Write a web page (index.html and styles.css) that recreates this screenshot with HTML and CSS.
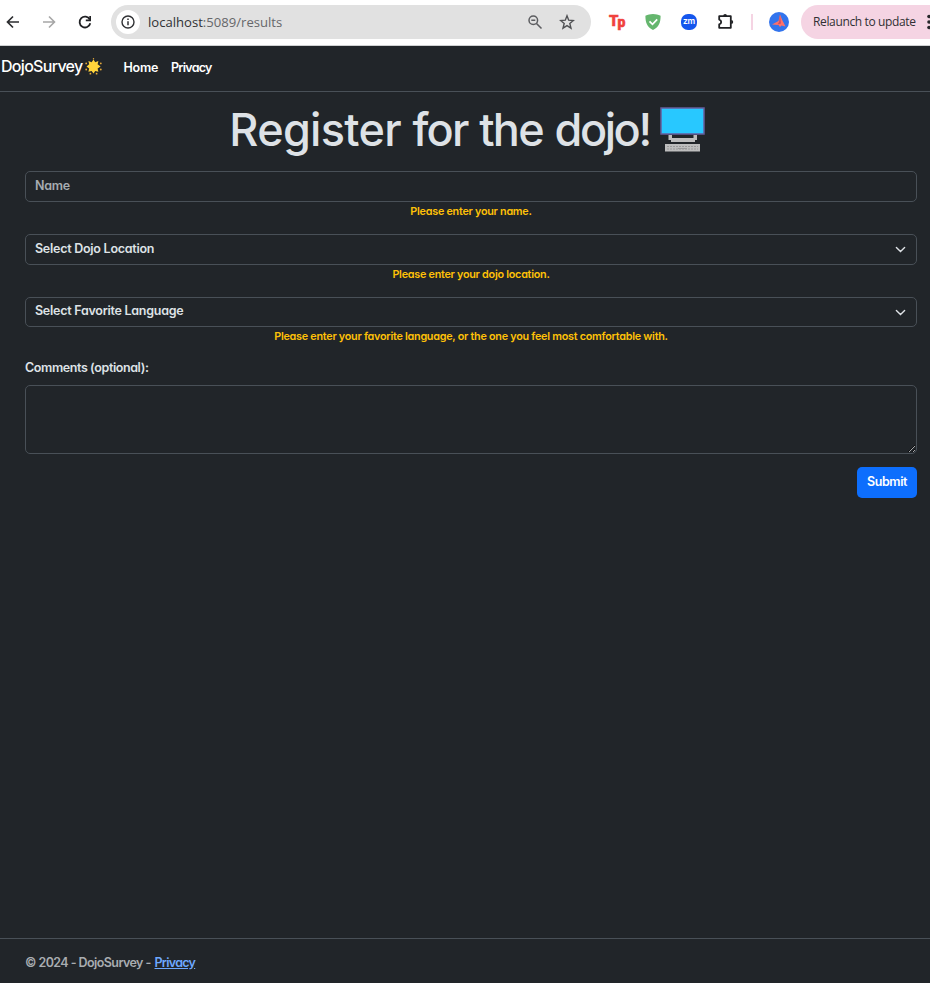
FILE: index.html
```html
<!DOCTYPE html>
<html lang="en">
<head>
<meta charset="utf-8">
<title>DojoSurvey</title>
<link rel="stylesheet" href="styles.css">
</head>
<body>
<div class="browser">
  <div class="history">
    <svg width="16" height="16" viewBox="0 0 16 16"><path d="M14 8H3M8 2.500 2.500 8 8 13.500" fill="none" stroke="#2b2c2f" stroke-width="1.700"/></svg>
    <svg width="16" height="16" viewBox="0 0 16 16"><path d="M2 8h11M8 2.500 13.500 8 8 13.500" fill="none" stroke="#a6a6a6" stroke-width="1.600"/></svg>
    <svg width="16" height="16" viewBox="0 0 16 16"><path d="M12.800 5.500A5.400 5.400 0 1 0 13.300 9.300" fill="none" stroke="#202124" stroke-width="1.800"/><path d="M14 2v5.200H8.800V5.600h3.500V2z" fill="#202124"/></svg>
  </div>
  <div class="address">
    <span class="info"><svg width="14" height="14" viewBox="0 0 14 14"><circle cx="7" cy="7" r="6" fill="none" stroke="#303134" stroke-width="1.400"/><path d="M7 6.200v4M7 3.500v1.500" stroke="#303134" stroke-width="1.500"/></svg></span>
    <span class="url"><b>localhost</b>:5089/results</span>
    <svg class="lens" width="16" height="16" viewBox="0 0 16 16"><circle cx="6.300" cy="6.200" r="4.300" fill="none" stroke="#5c5d60" stroke-width="1.500"/><path d="M4.300 6.200h4M9.500 9.500l5 5" stroke="#5c5d60" stroke-width="1.500"/></svg>
    <svg width="16" height="16" viewBox="0 0 16 16"><path d="m8 1.800 1.700 4.400 4.700.3-3.600 3 1.200 4.700L8 11.700l-4 2.500 1.200-4.700-3.600-3 4.700-.3z" fill="none" stroke="#505154" stroke-width="1.400"/></svg>
  </div>
  <div class="extensions">
    <span class="tp-app"><b>T</b><i>p</i></span>
    <svg width="16" height="16" viewBox="0 0 16 16"><path d="M8 0c3 .2 5 .9 7.600 1.700C15.600 8.500 14 13 8 16 2 13 .4 8.500.4 1.700 3 .9 5 .2 8 0z" fill="#65b66e"/><path d="m4.500 7.300 3 3 4.700-5" fill="none" stroke="#fff" stroke-width="1.700"/></svg>
    <span class="zoom-app">zm</span>
    <svg width="18" height="18" viewBox="0 0 18 18"><path d="M2.200 3.200h11.600v11.600H2.200v-3.400q2-.5 2-2.400t-2-2.400z" fill="none" stroke="#202124" stroke-width="1.800" stroke-linejoin="round"/><path d="M6.200 3a1.900 1.900 0 0 1 3.800 0zM14.200 7a2 2 0 0 1 0 4z" fill="#202124"/></svg>
  </div>
  <span class="divider"></span>
  <svg class="avatar" width="20" height="20" viewBox="0 0 20 20"><circle cx="10" cy="10" r="10" fill="#3274ed"/><path d="m11 2.500 2.200 5.500 3.300 6.500-4-1-1.500 1.500-1.500-2-6.500-.5L9.500 9z" fill="#ff7169"/><path d="m11 2.500-1 7.500-1.500 2.500 3.500-1z" fill="#cf5068"/></svg>
  <div class="update"><span>Relaunch to update</span><svg width="3" height="16" viewBox="0 0 3 16"><g fill="#27282b"><circle cx="2" cy="2.500" r="1.800"/><circle cx="2" cy="8" r="1.800"/><circle cx="2" cy="13.500" r="1.800"/></g></svg></div>
</div>
<nav class="navbar">
  <a class="brand"><span>DojoSurvey</span><svg width="17" height="17" viewBox="0 0 17 17"><path d="m8.500 1.500 1.700 2.700 3.200-1.100-.8 3.200 3 2.200-3 1.900.8 3.300-3.200-.8-1.700 2.600-1.900-2.600-3.200.8.800-3.200-2.700-2 2.700-2.200-.8-3.200 3.200 1.100z" fill="#ffd43b"/><g fill="#e5a93b"><circle cx="8.500" cy=".8" r=".7"/><circle cx="1.200" cy="5.400" r=".9"/><circle cx="15.800" cy="5.400" r=".9"/><circle cx="1.200" cy="11.500" r=".9"/><circle cx="15.800" cy="11.500" r=".9"/><circle cx="5.400" cy="15.700" r=".9"/><circle cx="11.600" cy="15.700" r=".9"/></g></svg></a>
  <a class="nav-home">Home</a><a class="nav-privacy">Privacy</a>
</nav>
<main class="content">
  <h1><span><span class="wide">Register</span> for the <span class="tight">dojo!</span></span><svg width="46" height="46" viewBox="0 0 46 46"><path d="M1 1h43v26H1z" fill="#28c8ff" stroke="#655e9d" stroke-width="1.500"/><path d="M8.500 28H12v3h21.500v-3H37v5h-2v2H11v-2H8.500z" fill="#bdbdbd"/><path d="M5 37h35v7.500H5z" fill="#bdbdbd"/><path d="M7 39.500h31M7 42h31" stroke="#999" stroke-width="1" stroke-dasharray="2 1"/><path d="M18 41.500h9" stroke="#999" stroke-width="1"/></svg></h1>
  <form>
    <div class="field"><input type="text" placeholder="Name"><p class="warning">Please enter your name.</p></div>
    <div class="field"><div class="select"><span>Select Dojo Location</span><svg width="11" height="11" viewBox="0 0 16 16"><path d="m2 5 6 6 6-6" fill="none" stroke="#dee2e6" stroke-width="2" stroke-linecap="round"/></svg></div><p class="warning">Please enter your dojo location.</p></div>
    <div class="field"><div class="select last"><span>Select Favorite Language</span><svg width="11" height="11" viewBox="0 0 16 16"><path d="m2 5 6 6 6-6" fill="none" stroke="#dee2e6" stroke-width="2" stroke-linecap="round"/></svg></div><p class="warning">Please enter your favorite language, or the one you feel most comfortable with.</p></div>
    <label for="comments">Comments (optional):</label>
    <textarea id="comments"></textarea>
    <button type="button">Submit</button>
  </form>
</main>
<footer><span class="copyright">© 2024 - DojoSurvey -</span><a>Privacy</a></footer>
</body>
</html>
```

FILE: styles.css
```css
* { box-sizing: border-box; }
body { margin: 0; height: 983px; overflow: hidden; display: flex; flex-direction: column; background: #212529; color: #dee2e6; font: 600 12.5px/20px Inter, sans-serif; font-feature-settings: "cv11"; letter-spacing: -0.26px; }
svg { display: block; flex: none; }
span, a { white-space: nowrap; }
.browser { height: 46px; flex: none; display: flex; align-items: center; background: #fff; border-bottom: 1px solid #cfd1d2; padding-bottom: 1px; font-family: "Open Sans", sans-serif; font-feature-settings: normal; letter-spacing: 0; }
.history { width: 111px; display: flex; gap: 20px; padding-left: 5px; }
.address { width: 480px; height: 34px; border-radius: 17px; background: #e1e1e1; display: flex; align-items: center; padding: 0 16px 0 5px; }
.info { width: 24px; height: 24px; border-radius: 50%; background: #fff; display: grid; place-items: center; }
.url { margin-left: 8px; font-size: 13.1px; font-weight: 400; color: #66676a; }
.url b { color: #303134; font-weight: 400; }
.lens { margin-left: auto; margin-right: 16px; }
.extensions { display: flex; align-items: center; gap: 20px; margin-left: 18px; }
.tp-app { width: 16px; height: 16px; display: flex; align-items: flex-start; color: #f0423d; font: 900 15px/15px Roboto, sans-serif; letter-spacing: -1px; }
.tp-app b { font-weight: 900; -webkit-text-stroke: 0.5px #f0423d; }
.tp-app i { font-style: normal; font-size: 14px; line-height: 17px; -webkit-text-stroke: 0.5px #f0423d; }
.zoom-app { width: 16px; height: 16px; border-radius: 7px; background: #1556ed; color: #fff; font: 600 8.5px/15px Inter, sans-serif; letter-spacing: -0.3px; text-align: center; }
.divider { width: 2px; height: 16px; background: #f5d4e3; margin-left: 16px; }
.avatar { margin-left: 16px; }
.update { margin-left: 12px; width: 129px; height: 34px; border-radius: 17px 0 0 17px; background: #f5d4e3; display: flex; align-items: center; justify-content: space-between; padding-left: 12px; font-size: 12px; font-weight: 400; letter-spacing: -0.36px; color: #303034; }
.navbar { height: 46px; flex: none; border-bottom: 1px solid #495057; display: flex; align-items: center; color: #fff; padding: 0 0 3px 1px; }
.brand { display: flex; align-items: center; font-size: 16px; font-weight: 500; letter-spacing: -0.7px; width: 122.5px; padding-bottom: 2px; }
.brand span { width: 83.5px; }
.nav-home, .nav-privacy { padding-top: 2px; }
.nav-home { width: 47.5px; letter-spacing: -0.2px; }
.nav-privacy { letter-spacing: -0.72px; }
.content { flex: 1; padding: 11px 13px 0 25px; }
h1 { height: 54px; margin: 0 0 14px; padding-right: 7px; display: flex; justify-content: center; align-items: flex-start; font-size: 45px; line-height: 54px; font-weight: 500; letter-spacing: -1.8px; word-spacing: 1.5px; }
h1 .wide { letter-spacing: -0.7px; }
h1 .tight { letter-spacing: -2.4px; }
h1 svg { margin: 4px 0 0 10px; }
.field { height: 63px; }
.field:nth-child(3) { height: 62px; }
input, .select, textarea { display: block; width: 100%; height: 31px; margin: 0; border: 1px solid #495057; border-radius: 5px; background: #212529; color: #dee2e6; font: inherit; letter-spacing: inherit; padding: 0 10px; }
input { padding: 0 9px 2px; }
input::placeholder { color: #a7acb1; opacity: 1; }
.select { display: flex; justify-content: space-between; align-items: center; padding: 0 10px 2px 9px; }
.select.last { height: 30px; }
.select svg { position: relative; top: 1px; }
.warning { margin: 0; text-align: center; color: #ffc107; font-size: 10.8px; line-height: 20px; letter-spacing: -0.26px; }
label { display: block; height: 26px; line-height: 18px; letter-spacing: -0.4px; }
textarea { height: 69px; resize: vertical; }
button { display: block; width: 60px; height: 31px; margin: 13px 0 0 auto; padding: 0 0 1px; border: 0; border-radius: 5px; background: #0d6efd; color: #fff; font: inherit; letter-spacing: -0.4px; }
footer { height: 45px; flex: none; border-top: 1px solid #495057; padding: 14px 25px; display: flex; color: #a9adb1; }
.copyright { width: 129.5px; letter-spacing: -0.57px; }
footer a { color: #6ea8fe; text-decoration: underline; letter-spacing: -0.72px; }
```
